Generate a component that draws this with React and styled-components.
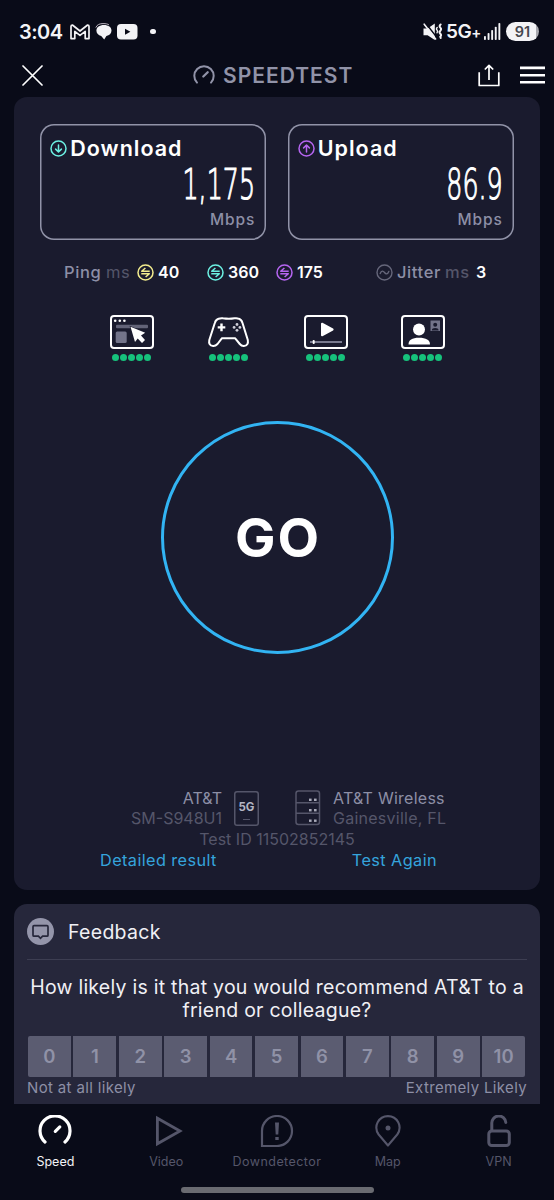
// Imports
import React from "react";
import styled, { createGlobalStyle, ThemeProvider } from "styled-components";

// Theme
const theme = {
	page: "#090b18",
	panel: "#1a1b2e",
	card: "#26273b",
	cell: "#5b5c71",
	line: "#9193a8",
	muted: "#8d8fa6",
	faint: "#55566a",
	link: "#35a4dc",
	ring: "#32b4f3",
	green: "#16c27c",
	teal: "#6cf0e2",
	purple: "#b565f0",
	yellow: "#f2ec8e",
};

// Data
const scores = [0, 1, 2, 3, 4, 5, 6, 7, 8, 9, 10];

// Icons
const GmailIcon = () => (
	<svg width="20" height="16" viewBox="0 0 20 16" fill="none" stroke="#f3f3f6" strokeWidth="1.7" strokeLinejoin="round">
		<path d="M1 14.6V2.4Q1 1 2.4 1L10 7L17.6 1Q19 1 19 2.4V14.6H15.2V7.4L10 11.4L4.8 7.4V14.6Z" />
	</svg>
);

const ChatIcon = () => (
	<svg width="17" height="17" viewBox="0 0 17 17">
		<path d="M.8 4.6C2 1.4 5 .6 8 .6C11 .6 12.8 .9 14 2" fill="none" stroke="#b9b1bd" strokeWidth="1" />
		<path d="M9 2C13.5 2 16.5 4.2 16.5 7.6C16.5 10.6 14.4 12.6 11.4 13L9.2 16.6L6.2 13.1C3.4 12.5 1.4 10.4 1.4 7.6C1.4 4.2 4.500 2 9 2Z" fill="#f3f3f6" />
	</svg>
);

const YoutubeIcon = () => (
	<svg width="21" height="16" viewBox="0 0 21 16">
		<rect width="20.5" height="15.5" rx="4" fill="#f3f3f6" />
		<path d="M8 4.7V10.7L13.4 7.7Z" fill="#090b18" />
	</svg>
);

const MuteIcon = () => (
	<svg width="20" height="18" viewBox="0 0 20 18">
		<path d="M.5 5.500H4.6L11.8 .5V17L4.6 12.3H.5Z" fill="#f3f3f6" />
		<path d="M2.600 0L13.800 14.400" stroke="#090b18" strokeWidth="1.500" />
		<path d="M1.2 1.2L12.6 16" stroke="#f3f3f6" strokeWidth="1.6" strokeLinecap="round" />
		<path d="M14.2 4.5Q12.8 5.8 14 7T14 9.8" fill="none" stroke="#f3f3f6" strokeWidth="1.4" strokeLinecap="round" />
		<path d="M17.6 1.5Q15.8 3.1 17.3 4.6T17.3 7.7Q15.8 9.2 17.3 10.7T17.3 13.8L17.7 15" fill="none" stroke="#f3f3f6" strokeWidth="2" strokeLinecap="round" />
	</svg>
);

const SignalIcon = () => (
	<svg width="17" height="18" viewBox="0 0 17 18" fill="#f3f3f6">
		<rect x="0" y="13" width="1.9" height="4" rx=".8" />
		<rect x="3.6" y="10" width="1.9" height="7" rx=".8" />
		<rect x="7.2" y="7" width="1.9" height="10" rx=".8" />
		<rect x="10.8" y="3.7" width="1.9" height="13.3" rx=".8" />
		<rect x="14.4" y="0" width="1.9" height="17" rx=".8" />
	</svg>
);

const CloseIcon = () => (
	<svg width="21" height="21" viewBox="0 0 21 21" stroke="#fff" strokeWidth="1.7" strokeLinecap="round">
		<path d="M1 1L20 20M20 1L1 20" />
	</svg>
);

const GaugeIcon = () => (
	<svg width="22" height="20" viewBox="0 0 22 20" fill="none" stroke="#9193a8" strokeWidth="2" strokeLinecap="round">
		<path d="M4 17.6A9.7 9.7 0 1 1 18 17.6" />
		<path d="M10.3 11.5L14.7 7.2" strokeWidth="2.3" />
	</svg>
);

const ShareIcon = () => (
	<svg width="22" height="23" viewBox="0 0 22 23" fill="none" stroke="#fff" strokeWidth="1.7" strokeLinejoin="round">
		<path d="M1.2 8.2V21.5H20.8V8.2M11 16V1.6M6.8 5.5L11 1.3L15.2 5.5" />
	</svg>
);

const MenuIcon = () => (
	<svg width="25" height="18" viewBox="0 0 25 18" fill="#fff">
		<path d="M0 .6H25V3.2H0ZM0 7.9H25V10.5H0ZM0 15H25V17.6H0Z" />
	</svg>
);

const ArrowIcon = ({ color, up }) => (
	<svg width="17" height="17" viewBox="0 0 17 17" fill="none" stroke={ color } strokeWidth="1.5" strokeLinecap="round" strokeLinejoin="round">
		<circle cx="8.5" cy="8.5" r="7.5" />
		{ up
			? <path d="M8.5 12V5.2M5.6 7.9L8.5 5L11.4 7.9" />
			: <path d="M8.5 5V11.8M5.6 9.1L8.5 12L11.4 9.1" /> }
	</svg>
);

const PingIcon = ({ color }) => (
	<svg width="17" height="17" viewBox="0 0 17 17" fill="none" stroke={ color } strokeWidth="1.5" strokeLinejoin="round">
		<circle cx="8.5" cy="8.5" r="7.5" />
		<path d="M12.7 7.3H4.7L8.4 4M4.3 9.7H12.3L8.6 13" />
	</svg>
);

const JitterIcon = () => (
	<svg width="17" height="17" viewBox="0 0 17 17" fill="none" stroke="#66677b" strokeWidth="1.4" strokeLinecap="round">
		<circle cx="8.5" cy="8.5" r="7.5" />
		<path d="M4.2 9.6C5.5 6.3 7.2 6.8 8.5 8.5S11.5 10.7 12.8 7.4" />
	</svg>
);

const BrowsingIcon = () => (
	<svg width="44" height="34" viewBox="0 0 44 34">
		<rect x="1" y="1" width="42" height="32" rx="3" fill="none" stroke="#fff" strokeWidth="2" />
		<circle cx="5.2" cy="5.7" r="1.3" fill="#fff" />
		<circle cx="9.8" cy="5.7" r="1.3" fill="#fff" />
		<circle cx="14.4" cy="5.7" r="1.3" fill="#fff" />
		<rect x="6" y="9.7" width="32" height="3.5" rx="1" fill="#626378" />
		<rect x="5.7" y="16.5" width="11" height="11.5" rx="1.5" fill="#73748a" />
		<path d="M20.5 11.8L35.2 17.8L31 20.5L35 25L32 28L27.7 23.6L25 27Z" fill="#fff" stroke="#1a1b2e" strokeWidth="1.2" paintOrder="stroke" />
	</svg>
);

const GamingIcon = () => (
	<svg width="44" height="34" viewBox="0 0 44 34">
		<path d="M11.5 3.8Q14 2.8 16 3.3Q22 4.3 27.5 3.3Q30 2.8 32 3.8Q34.5 4.6 35.5 8L40.8 25Q41.8 30.4 36.8 31Q34.5 31.1 32.8 29L28 23.2H15L10.5 29Q8.5 31.1 6.2 31Q1.2 30.4 2.3 25L7.8 8Q8.8 4.6 11.5 3.8Z" fill="none" stroke="#fff" strokeWidth="2" strokeLinejoin="round" />
		<path d="M14.5 8.6V16.2M10.7 12.4H18.3" stroke="#fff" strokeWidth="2.4" />
		<g fill="#d0d0da">
			<circle cx="30" cy="9.5" r="1.4" />
			<circle cx="30" cy="15.3" r="1.4" />
			<circle cx="27.1" cy="12.4" r="1.4" />
			<circle cx="32.9" cy="12.4" r="1.4" />
		</g>
	</svg>
);

const StreamingIcon = () => (
	<svg width="44" height="34" viewBox="0 0 44 34">
		<rect x="1" y="1" width="42" height="32" rx="3" fill="none" stroke="#fff" strokeWidth="2" />
		<path d="M18 8.7V20.3L28.6 14.5Z" fill="#fff" stroke="#fff" strokeWidth="2" strokeLinejoin="round" />
		<path d="M6 27H38" stroke="#9193a8" strokeWidth="1.6" />
		<rect x="8.7" y="25" width="2" height="4" rx=".8" fill="#fff" />
	</svg>
);

const ChattingIcon = () => (
	<svg width="44" height="34" viewBox="0 0 44 34">
		<rect x="1" y="1" width="42" height="32" rx="3" fill="none" stroke="#fff" strokeWidth="2" />
		<circle cx="18" cy="14.5" r="6" fill="#fff" />
		<path d="M7.5 29.5C7.5 25 11 22.8 18 22.8S29 25 29 29.5Z" fill="#fff" />
		<rect x="29.5" y="5.5" width="9.5" height="10.5" fill="#73748a" />
		<circle cx="34.2" cy="9.8" r="2" fill="#1a1b2e" />
		<path d="M30.8 15.4Q31 13 34.2 13T37.6 15.4Z" fill="#1a1b2e" />
	</svg>
);

const ServerIcon = () => (
	<svg width="26" height="36" viewBox="0 0 26 36" fill="none" stroke="#55566a" strokeWidth="1.5">
		<rect x="1" y="1" width="23.5" height="33.5" rx="2.5" />
		<path d="M1 12.8H24.5M1 23.3H24.5" />
		<g fill="#aaabba" stroke="none">
			<rect x="14" y="8.6" width="2.6" height="2.4" />
			<rect x="19" y="8.6" width="2.6" height="2.4" />
			<rect x="14" y="19" width="2.6" height="2.4" />
			<rect x="19" y="19" width="2.6" height="2.4" />
			<rect x="14" y="29.5" width="2.6" height="2.4" />
			<rect x="19" y="29.5" width="2.6" height="2.4" />
		</g>
	</svg>
);

const FeedbackIcon = () => (
	<svg width="27" height="27" viewBox="0 0 27 27">
		<circle cx="13.5" cy="13.5" r="13.5" fill="#9495aa" />
		<path d="M7 7.7H20Q21 7.7 21 8.7V17.2Q21 18.2 20 18.2H15.6L13.5 20.3L11.4 18.2H7Q6 18.2 6 17.2V8.7Q6 7.7 7 7.7Z" fill="none" stroke="#26273b" strokeWidth="1.7" />
	</svg>
);

const SpeedTabIcon = () => (
	<svg width="34" height="32" viewBox="0 0 34 32" fill="none" stroke="#fff" strokeWidth="3.2" strokeLinecap="round">
		<path d="M7 27A15 15 0 1 1 27 27" />
		<path d="M17.3 16.3L21.8 11.9" />
	</svg>
);

const VideoTabIcon = () => (
	<svg width="34" height="32" viewBox="0 0 34 32" fill="none" stroke="#55566a" strokeWidth="2.8">
		<path d="M8.4 3.200V28.800L31 16Z" />
	</svg>
);

const DowndetectorTabIcon = () => (
	<svg width="34" height="32" viewBox="0 0 34 32" fill="none" stroke="#55566a" strokeWidth="2.2">
		<path d="M2 31V16A15 15 0 1 1 17 31Z" />
		<path d="M15 7.5H19L18.3 19.5H15.7ZM15.3 22H18.7V25H15.3Z" fill="#55566a" stroke="none" />
	</svg>
);

const MapTabIcon = () => (
	<svg width="34" height="32" viewBox="0 0 34 32" fill="none" stroke="#55566a" strokeWidth="2.2" strokeLinejoin="round">
		<path d="M17 30.5L7.2 19.5C1.4 11.5 7 1.2 17 1.2S32.6 11.5 26.8 19.5Z" transform="translate(.8 0) scale(.95 1)" />
		<circle cx="17" cy="13" r="2.5" fill="#55566a" stroke="none" />
	</svg>
);

const VpnTabIcon = () => (
	<svg width="34" height="32" viewBox="0 0 34 32" fill="none" stroke="#55566a" strokeWidth="3" strokeLinecap="round">
		<rect x="6.8" y="16" width="20.5" height="14.5" rx="3" />
		<path d="M9.8 15.5V8.5A7 7 0 0 1 23.8 7.5" />
	</svg>
);

// Card with the speed of one direction
const ResultCard = ({ label, value, color, up }) => (
	<Card>
		<CardTitle>
			<ArrowIcon color={ color } up={ up } />
			<span>{ label }</span>
		</CardTitle>
		<CardValue>{ value }</CardValue>
		<CardUnit>Mbps</CardUnit>
	</Card>
);

// Activity icon with its five rating dots
const Rating = ({ children }) => (
	<RatingItem>
		{ children }
		<Dots>
			<i /><i /><i /><i /><i />
		</Dots>
	</RatingItem>
);

// Component
const App = () => {

	// Return
	return(
		<ThemeProvider theme={ theme }>
			<GlobalStyle />
			<Screen>
				<StatusBar>
					<Clock>3:04</Clock>
					<GmailIcon />
					<ChatIcon />
					<YoutubeIcon />
					<Bullet />
					<StatusRight>
						<MuteIcon />
						<Network>5G<small>+</small></Network>
						<SignalIcon />
						<Battery>91</Battery>
					</StatusRight>
				</StatusBar>
				<Header>
					<CloseIcon />
					<Brand>
						<GaugeIcon />
						<h1>SPEEDTEST</h1>
					</Brand>
					<Actions>
						<ShareIcon />
						<MenuIcon />
					</Actions>
				</Header>
				<Panel>
					<Results>
						<ResultCard label="Download" value="1,175" color={ theme.teal } />
						<ResultCard label="Upload" value="86.9" color={ theme.purple } up />
					</Results>
					<Latency>
						<Term $width="42px">Ping</Term>
						<Unit $width="31px">ms</Unit>
						<PingIcon color={ theme.yellow } />
						<Figure $width="49px">40</Figure>
						<PingIcon color={ theme.teal } />
						<Figure $width="48px">360</Figure>
						<PingIcon color={ theme.purple } />
						<Figure $width="79px">175</Figure>
						<JitterIcon />
						<Term $width="48px" $after>Jitter</Term>
						<Unit $width="27px" $bold>ms</Unit>
						<Figure $width="12px">3</Figure>
					</Latency>
					<Ratings>
						<Rating><BrowsingIcon /></Rating>
						<Rating><GamingIcon /></Rating>
						<Rating><StreamingIcon /></Rating>
						<Rating><ChattingIcon /></Rating>
					</Ratings>
					<GoButton>GO</GoButton>
					<Connection>
						<Place $right>
							<strong>AT&amp;T</strong>
							<span>SM-S948U1</span>
						</Place>
						<Phone>5G</Phone>
						<ServerIcon />
						<Place>
							<strong>AT&amp;T Wireless</strong>
							<span>Gainesville, FL</span>
						</Place>
					</Connection>
					<TestId>Test ID 11502852145</TestId>
					<Links>
						<a>Detailed result</a>
						<a>Test Again</a>
					</Links>
				</Panel>
				<Feedback>
					<FeedbackHead>
						<FeedbackIcon />
						<h2>Feedback</h2>
					</FeedbackHead>
					<Question>
						How likely is it that you would recommend AT&amp;T to a<br />friend or colleague?
					</Question>
					<Scale>
						{ scores.map((score) => <Score key={ score }>{ score }</Score>) }
					</Scale>
					<ScaleLabels>
						<span>Not at all likely</span>
						<span>Extremely Likely</span>
					</ScaleLabels>
				</Feedback>
				<Nav>
					<Tab $active><SpeedTabIcon />Speed</Tab>
					<Tab><VideoTabIcon />Video</Tab>
					<Tab $spacing="0.45px"><DowndetectorTabIcon />Downdetector</Tab>
					<Tab><MapTabIcon />Map</Tab>
					<Tab><VpnTabIcon />VPN</Tab>
				</Nav>
				<HomeBar />
			</Screen>
		</ThemeProvider>
	);

};

// Styled
const GlobalStyle = createGlobalStyle`
	*{
		box-sizing: border-box;
	}
	body{
		margin: 0;
		background-color: #090b18;
		font-family: Inter, "Liberation Sans", sans-serif;
	}
	h1, h2, p{
		margin: 0;
	}
	svg{
		display: block;
		flex-shrink: 0;
	}
`;

const Screen = styled.div`
	display: flex;
	flex-direction: column;
	width: 554px;
	height: 1200px;
	overflow: hidden;
	background-color: ${ ({ theme }) => theme.page };
	white-space: nowrap;
`;

const StatusBar = styled.div`
	display: flex;
	align-items: center;
	height: 53px;
	padding: 10px 15px 0 19px;
	color: #f3f3f6;
	svg{
		margin-right: 5px;
	}
`;

const Clock = styled.span`
	width: 51px;
	font-size: 20px;
	font-weight: 600;
	letter-spacing: -0.5px;
`;

const Bullet = styled.i`
	width: 5.5px;
	height: 5.5px;
	margin-left: 7px;
	border-radius: 50%;
	background-color: #f3f3f6;
`;

const StatusRight = styled.div`
	display: flex;
	align-items: center;
	margin-left: auto;
`;

const Network = styled.span`
	width: 37px;
	margin-right: 1px;
	margin-left: -2px;
	font-size: 19px;
	font-weight: 600;
	letter-spacing: -0.5px;
	small{
		font-size: 15px;
	}
`;

const Battery = styled.span`
	width: 33px;
	height: 19px;
	border-radius: 10px;
	background: linear-gradient(to right, #f3f3f6 91%, #a9a9b0 91%);
	color: #45464f;
	font-size: 14.5px;
	font-weight: 600;
	line-height: 19px;
	text-align: center;
`;

const Header = styled.header`
	display: flex;
	align-items: center;
	height: 44px;
	padding: 0 9px 0 22px;
`;

const Brand = styled.div`
	display: flex;
	align-items: center;
	gap: 8px;
	margin-left: 150px;
	h1{
		color: ${ ({ theme }) => theme.line };
		font-size: 21px;
		font-weight: 600;
		letter-spacing: 1px;
	}
`;

const Actions = styled.div`
	display: flex;
	align-items: center;
	gap: 20px;
	margin-left: auto;
`;

const Panel = styled.main`
	display: flex;
	flex-direction: column;
	height: 793px;
	margin: 0 14px;
	padding-top: 27px;
	border-radius: 13px;
	background-color: ${ ({ theme }) => theme.panel };
`;

const Results = styled.section`
	display: flex;
	gap: 21.5px;
	padding: 0 26.3px;
`;

const Card = styled.div`
	display: flex;
	flex: 1;
	flex-direction: column;
	height: 116px;
	padding: 12px 11px 0 10px;
	border-radius: 14px;
	box-shadow: inset 0 0 0 1.5px ${ ({ theme }) => theme.line };
`;

const CardTitle = styled.div`
	display: flex;
	align-items: center;
	gap: 3px;
	height: 24px;
	color: #fff;
	font-size: 21.5px;
	font-weight: 600;
	letter-spacing: 1px;
`;

const CardValue = styled.div`
	align-self: flex-end;
	height: 48px;
	color: #fff;
	font-family: "DejaVu Sans", sans-serif;
	font-size: 43px;
	font-weight: 200;
	line-height: 49px;
	transform: scaleX(0.59);
	transform-origin: right;
	-webkit-text-stroke: 1.2px #fff;
`;

const CardUnit = styled.div`
	align-self: flex-end;
	margin-top: 2px;
	color: ${ ({ theme }) => theme.muted };
	font-size: 15.5px;
	font-weight: 500;
	letter-spacing: 0.9px;
`;

const Latency = styled.section`
	display: flex;
	align-items: center;
	height: 20px;
	margin-top: 22px;
	padding-left: 50px;
	font-size: 16.5px;
`;

const Term = styled.span`
	width: ${ ({ $width }) => $width };
	margin-left: ${ ({ $after }) => $after ? "4px" : "0" };
	color: ${ ({ theme }) => theme.muted };
	font-weight: 500;
	letter-spacing: 0.6px;
`;

const Unit = styled.span`
	width: ${ ({ $width }) => $width };
	color: ${ ({ theme }) => theme.faint };
	font-weight: ${ ({ $bold }) => $bold ? 500 : 400 };
	letter-spacing: 0.5px;
`;

const Figure = styled.span`
	width: ${ ({ $width }) => $width };
	margin-left: 4px;
	color: #fff;
	font-size: 16px;
	font-weight: 600;
`;

const Ratings = styled.section`
	display: flex;
	gap: 53px;
	margin-top: 33px;
	padding-left: 95.5px;
`;

const RatingItem = styled.div`
	width: 44px;
`;

const Dots = styled.div`
	display: flex;
	justify-content: center;
	gap: 1.1px;
	margin-top: 5px;
	i{
		width: 7px;
		height: 7px;
		border-radius: 50%;
		background-color: ${ ({ theme }) => theme.green };
	}
`;

const GoButton = styled.button`
	align-self: center;
	width: 233px;
	height: 233px;
	margin-top: 60px;
	padding: 0 0 0 2px;
	border: 3px solid ${ ({ theme }) => theme.ring };
	border-radius: 50%;
	background-color: transparent;
	color: #fff;
	font-family: inherit;
	font-size: 54px;
	font-weight: 650;
	letter-spacing: 2px;
`;

const Connection = styled.section`
	display: flex;
	align-items: center;
	height: 42px;
	margin-top: auto;
	svg{
		margin-right: 12px;
		margin-left: 36px;
	}
`;

const Place = styled.div`
	display: flex;
	flex-direction: column;
	width: ${ ({ $right }) => $right ? "208px" : "auto" };
	align-items: ${ ({ $right }) => $right ? "flex-end" : "flex-start" };
	color: ${ ({ theme }) => theme.faint };
	font-size: 16px;
	letter-spacing: ${ ({ $right }) => $right ? "0" : "0.25px" };
	line-height: 20.5px;
	strong{
		color: ${ ({ theme }) => theme.muted };
		font-weight: 400;
	}
`;

const Phone = styled.div`
	display: flex;
	flex-direction: column;
	align-items: center;
	width: 25px;
	height: 35px;
	margin-left: 12px;
	padding-top: 9px;
	border-radius: 3px;
	box-shadow: inset 0 0 0 1.5px ${ ({ theme }) => theme.faint };
	color: #b4b5c3;
	font-size: 11.5px;
	font-weight: 700;
	line-height: 15px;
	&::after{
		content: "";
		width: 7px;
		height: 1.5px;
		margin-top: 4px;
		background-color: ${ ({ theme }) => theme.faint };
	}
`;

const TestId = styled.p`
	color: ${ ({ theme }) => theme.faint };
	font-size: 16px;
	line-height: 21px;
	text-align: center;
`;

const Links = styled.div`
	display: flex;
	justify-content: space-between;
	margin-bottom: 19px;
	padding: 0 103px 0 86px;
	color: ${ ({ theme }) => theme.link };
	font-size: 16.3px;
	letter-spacing: 0.4px;
	line-height: 21px;
`;

const Feedback = styled.section`
	height: 200px;
	margin: 14px 14px 0;
	padding: 0 13px;
	border-radius: 13px 13px 0 0;
	background-color: ${ ({ theme }) => theme.card };
`;

const FeedbackHead = styled.div`
	display: flex;
	align-items: center;
	gap: 14px;
	height: 56px;
	border-bottom: 1px solid #3d3e52;
	h2{
		color: #f0f0f5;
		font-size: 19.5px;
		font-weight: 400;
		letter-spacing: 0.3px;
	}
`;

const Question = styled.p`
	margin-top: 16px;
	color: #f0f0f5;
	font-size: 19.5px;
	letter-spacing: 0.25px;
	line-height: 22.5px;
	text-align: center;
`;

const Scale = styled.div`
	display: grid;
	grid-template-columns: repeat(11, 1fr);
	gap: 2.7px;
	margin: 15px 2px 0 1px;
	border-radius: 2px;
	overflow: hidden;
`;

const Score = styled.span`
	height: 40.5px;
	background-color: ${ ({ theme }) => theme.cell };
	color: #9092a7;
	font-size: 18.5px;
	font-weight: 600;
	line-height: 41px;
	text-align: center;
`;

const ScaleLabels = styled.div`
	display: flex;
	justify-content: space-between;
	color: ${ ({ theme }) => theme.muted };
	font-size: 15px;
	letter-spacing: 0.35px;
	line-height: 22px;
`;

const Nav = styled.nav`
	display: grid;
	grid-template-columns: repeat(5, 1fr);
	height: 83px;
	padding-top: 11px;
`;

const Tab = styled.a`
	display: flex;
	flex-direction: column;
	align-items: center;
	gap: 6px;
	color: ${ ({ $active, theme }) => $active ? "#f3f3f6" : theme.faint };
	font-size: 12.5px;
	letter-spacing: ${ ({ $spacing }) => $spacing || "0" };
	line-height: 17px;
`;

const HomeBar = styled.div`
	align-self: center;
	width: 193px;
	height: 5.5px;
	border-radius: 3px;
	background-color: #6a6b71;
`;

// Export
export default App;
